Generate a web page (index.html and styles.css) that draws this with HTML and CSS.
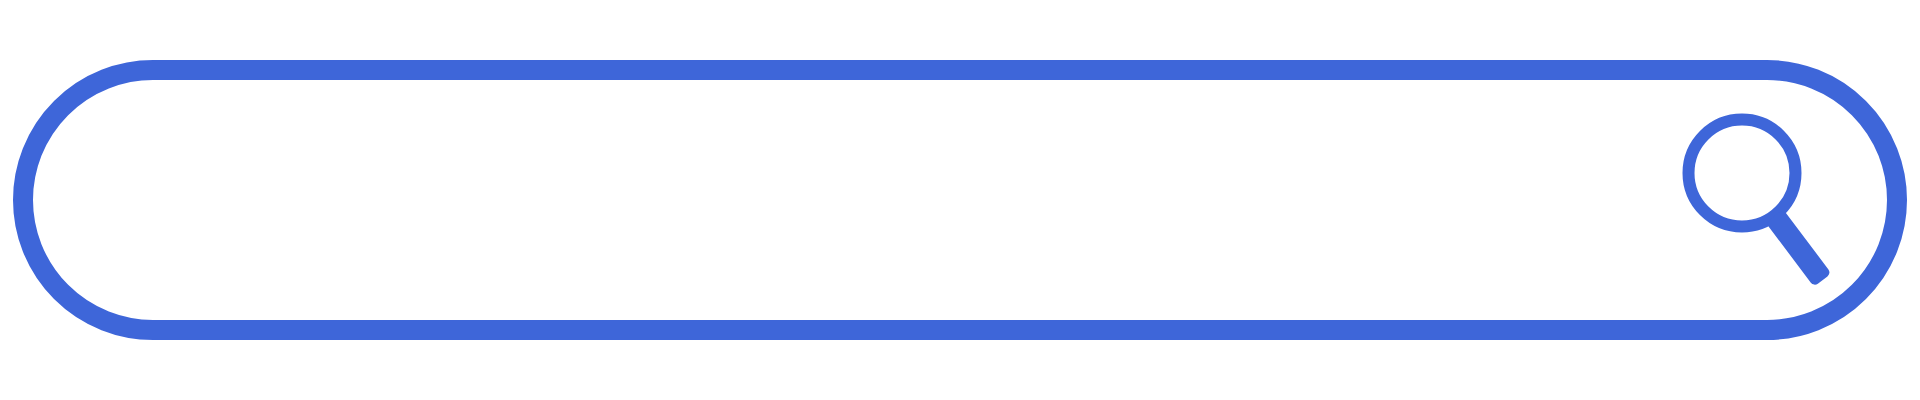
FILE: index.html
```html
<!DOCTYPE html>
<html lang="en">
<head>
  <meta charset="UTF-8">
  <title>Search</title>
  <link rel="stylesheet" href="styles.css">
</head>
<body>

  <div class="search-box">
    <input class="search-input" type="text" aria-label="Search">
    <svg class="search-icon" width="152" height="174" viewBox="0 0 152 174">
      <circle cx="60" cy="60" r="53.5" fill="none" stroke="#3e66d9" stroke-width="12"/>
      <rect x="54" y="-11" width="80" height="22" rx="5" fill="#3e66d9" transform="translate(60 60) rotate(53)"/>
    </svg>
  </div>

</body>
</html>
```

FILE: styles.css
```css
body {
  margin: 0;
  padding: 60px 13.33px;
  background-color: #fff;
}
.search-box {
  display: flex;
  align-items: center;
  height: 280px;
  box-sizing: border-box;
  padding-right: 53px;
  border: 20px solid #3e66d9;
  border-radius: 140px;
}
.search-input {
  flex: 1;
  min-width: 0;
  border: none;
  outline: none;
  background: transparent;
}
.search-icon {
  flex: none;
}
```
